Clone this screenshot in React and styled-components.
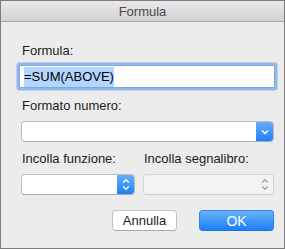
import React from "react";
import styled, { createGlobalStyle } from "styled-components";

const Global = createGlobalStyle`
  html, body { margin: 0; padding: 0; background: #ececec; }
  * { box-sizing: border-box; }
`;

const Window = styled.div`
  width: 285px;
  height: 249px;
  border: 1px solid #7c7c7c;
  background: #ececec;
  font-family: "Liberation Sans", Arial, sans-serif;
  font-size: 13px;
  color: #1b1b1b;
  display: flex;
  flex-direction: column;
`;

const TitleBar = styled.div`
  height: 21px;
  flex: none;
  background: linear-gradient(#e9e7e9, #d4d2d4);
  border-bottom: 1px solid #a6a6a6;
  display: flex;
  align-items: center;
  justify-content: center;
  color: #4b4b4b;
  font-size: 13px;
  padding-top: 1px;
`;

const Body = styled.div`
  padding: 21px 10px 0 20px;
  display: flex;
  flex-direction: column;
`;

const Label = styled.div`
  line-height: 16px;
  padding-left: 1px;
  margin-top: ${(p) => p.$mt || 0}px;
  margin-bottom: ${(p) => p.$mb || 0}px;
`;

const TextField = styled.div`
  height: 23px;
  margin: 0 -1px 0 -2px;
  background: #fff;
  border: 1px solid #7fa8e2;
  border-radius: 1px;
  box-shadow: 0 0 0 2.5px rgba(118, 167, 236, 0.75);
  padding: 1px 0 0 4px;
  display: flex;
  align-items: flex-start;
`;

const Selected = styled.span`
  background: #b3d5fe;
  color: #000;
  line-height: 20px;
  font-size: 13px;
`;

const Select = styled.div`
  height: 21px;
  border-radius: 4px;
  display: flex;
  background: ${(p) => (p.$disabled ? "#f2f2f2" : "#fff")};
  border: 1px solid ${(p) => (p.$disabled ? "#d6d6d6" : "#bdbdbd")};
  border-bottom-color: ${(p) => (p.$disabled ? "#cfcfcf" : "#a9a9a9")};
  overflow: hidden;
`;

const SelectField = styled.div`
  flex: 1;
`;

const Arrow = styled.div`
  width: 18px;
  flex: none;
  margin: -1px -1px -1px 0;
  display: flex;
  align-items: center;
  justify-content: center;
  background: ${(p) =>
    p.$disabled ? "transparent" : "linear-gradient(#6bb0fb, #1c7ef6)"};
  border-radius: 0 4px 4px 0;
`;

const Grid = styled.div`
  display: grid;
  grid-template-columns: 114px 1fr;
  column-gap: 8px;
`;

const Buttons = styled.div`
  display: flex;
  justify-content: flex-end;
  gap: 22px;
  margin-top: 15px;
`;

const Button = styled.div`
  height: 21px;
  width: ${(p) => p.$w}px;
  border-radius: 4px;
  display: flex;
  align-items: center;
  justify-content: center;
  font-size: ${(p) => (p.$primary ? 14 : 13)}px;
  color: ${(p) => (p.$primary ? "#fff" : "#1b1b1b")};
  background: ${(p) =>
    p.$primary ? "linear-gradient(#6cb3fb, #1a80f9)" : "#fff"};
  border: 1px solid ${(p) => (p.$primary ? "#2a86f5" : "#c2c2c2")};
  border-bottom-color: ${(p) => (p.$primary ? "#1d72e0" : "#a8a8a8")};
`;

const ChevronDown = () => (
  <svg width="8" height="6" viewBox="0 0 8 6">
    <path d="M1 1.5 L4 4.5 L7 1.5" fill="none" stroke="#fff" strokeWidth="1.4" />
  </svg>
);

const UpDown = ({ color }) => (
  <svg width="8" height="13" viewBox="0 0 8 13">
    <path d="M1.2 4.5 L4 1.7 L6.8 4.5" fill="none" stroke={color} strokeWidth="1.3" />
    <path d="M1.2 8.5 L4 11.3 L6.8 8.5" fill="none" stroke={color} strokeWidth="1.3" />
  </svg>
);

export default function App() {
  return (
    <>
      <Global />
      <Window>
        <TitleBar>Formula</TitleBar>
        <Body>
          <Label $mb={6}>Formula:</Label>
          <TextField>
            <Selected>=SUM(ABOVE)</Selected>
          </TextField>
          <Label $mt={10} $mb={7}>Formato numero:</Label>
          <Select>
            <SelectField />
            <Arrow>
              <ChevronDown />
            </Arrow>
          </Select>
          <Grid>
            <Label $mt={9} $mb={7}>Incolla funzione:</Label>
            <Label $mt={9} $mb={7}>Incolla segnalibro:</Label>
            <Select>
              <SelectField />
              <Arrow>
                <UpDown color="#fff" />
              </Arrow>
            </Select>
            <Select $disabled>
              <SelectField />
              <Arrow $disabled>
                <UpDown color="#a3a3a3" />
              </Arrow>
            </Select>
          </Grid>
          <Buttons>
            <Button $w={65}>Annulla</Button>
            <Button $w={75} $primary>OK</Button>
          </Buttons>
        </Body>
      </Window>
    </>
  );
}
